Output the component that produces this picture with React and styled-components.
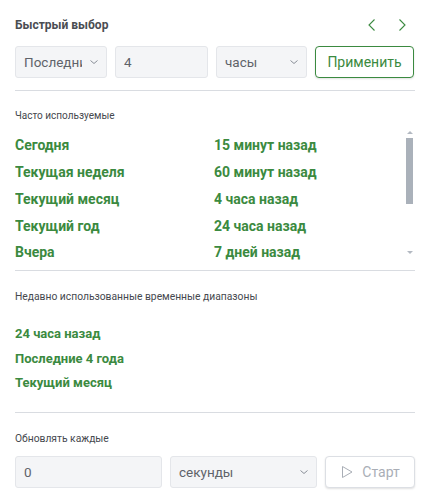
import React from "react";
import styled, { createGlobalStyle } from "styled-components";

const Global = createGlobalStyle`
  html, body { margin: 0; padding: 0; background: #fff; }
  body { font-family: Roboto, "Noto Sans", sans-serif; }
  * { box-sizing: border-box; }
`;

const Panel = styled.div`
  width: 425px;
  height: 499px;
  padding: 12px 10px 0 15px;
  display: flex;
  flex-direction: column;
  background: #fff;
`;

const Header = styled.div`
  height: 26px;
  display: flex;
  align-items: center;
  justify-content: space-between;
`;

const Title = styled.div`
  font-size: 12px;
  font-weight: 700;
  color: #4a4d52;
`;

const Arrows = styled.div`
  display: flex;
  gap: 14px;
  padding-right: 5px;
`;

const ArrowBtn = styled.button`
  border: 0;
  background: none;
  padding: 0;
  width: 16px;
  height: 16px;
  display: flex;
  align-items: center;
  justify-content: center;
  color: #3b8a40;
  cursor: pointer;
`;

const Row = styled.div`
  display: grid;
  grid-template-columns: ${(p) => p.$cols};
  gap: 8px;
  margin-top: ${(p) => p.$mt || 0}px;
  height: 32px;
`;

const Field = styled.div`
  height: 32px;
  background: #f4f5f7;
  border: 1px solid #e4e6ea;
  border-radius: 3px;
  display: flex;
  align-items: center;
  padding: 0 7px 0 8px;
  font-size: 13.5px;
  color: #5f636a;
  overflow: hidden;
`;

const FieldText = styled.span`
  flex: 1;
  white-space: nowrap;
  overflow: hidden;
  max-width: ${(p) => p.$max || "none"};
`;

const Chevron = styled.span`
  display: flex;
  color: #8a8f98;
  margin-left: auto;
  flex: none;
`;

const Button = styled.button`
  height: 32px;
  border-radius: 4px;
  border: 1px solid ${(p) => (p.$disabled ? "#dcdfe4" : "#3b8a40")};
  background: #fff;
  color: ${(p) => (p.$disabled ? "#a9aeb6" : "#3b8a40")};
  font-family: inherit;
  font-size: 14px;
  display: flex;
  align-items: center;
  justify-content: center;
  gap: 8px;
  padding: 0;
  box-shadow: 0 1px 2px rgba(0, 0, 0, 0.12);
`;

const Divider = styled.hr`
  border: 0;
  border-top: 1px solid #d9dce1;
  margin: ${(p) => p.$m};
  width: 100%;
`;

const Label = styled.div`
  font-size: ${(p) => p.$size || 11}px;
  line-height: 16px;
  color: #45484e;
  margin-top: ${(p) => p.$mt || 0}px;
`;

const ListFrame = styled.div`
  margin-top: 4px;
  height: 134px;
  display: flex;
`;

const Viewport = styled.div`
  flex: 1;
  overflow: hidden;
  padding-top: 4px;
`;

const Track = styled.div`
  width: 11px;
  display: flex;
  flex-direction: column;
  align-items: center;
  padding: 3px 0 8px;
`;

const TrackArrow = styled.div`
  width: 0;
  height: 0;
  border-left: 3px solid transparent;
  border-right: 3px solid transparent;
  ${(p) =>
    p.$down
      ? "border-top: 3px solid #b3b9c2; margin-top: auto;"
      : "border-bottom: 3px solid #b3b9c2;"}
`;

const Thumb = styled.div`
  width: 7px;
  height: 66px;
  margin-top: 4px;
  background: #aab1ba;
`;

const Grid = styled.div`
  display: grid;
  grid-template-columns: 199px 1fr;
  grid-auto-rows: 26.75px;
  align-items: center;
`;

const Link = styled.a`
  font-size: ${(p) => p.$size || 14}px;
  font-weight: 700;
  color: #3b8a40;
  text-decoration: none;
  line-height: 20px;
  white-space: nowrap;
  cursor: pointer;
`;

const RecentList = styled.div`
  margin-top: 17px;
  display: flex;
  flex-direction: column;
`;

const RecentItem = styled.div`
  height: 24.5px;
  display: flex;
  align-items: center;
`;

const ChevronDown = () => (
  <svg width="10" height="10" viewBox="0 0 10 10" fill="none">
    <path d="M1.5 3.5L5 6.5l3.5-3" stroke="currentColor" strokeWidth="1" />
  </svg>
);

const common = [
  ["Сегодня", "15 минут назад"],
  ["Текущая неделя", "60 минут назад"],
  ["Текущий месяц", "4 часа назад"],
  ["Текущий год", "24 часа назад"],
  ["Вчера", "7 дней назад"],
  ["Неделя до текущего дня", "30 дней назад"],
  ["Месяц до текущего дня", "90 дней назад"],
  ["Год до текущего дня", "1 год назад"],
];

const recent = ["24 часа назад", "Последние 4 года", "Текущий месяц"];

export default function App() {
  return (
    <>
      <Global />
      <Panel>
        <Header>
          <Title>Быстрый выбор</Title>
          <Arrows>
            <ArrowBtn aria-label="Назад">
              <svg width="12" height="14" viewBox="0 0 12 14" fill="none">
                <path d="M8.5 1.5L3 7l5.5 5.5" stroke="currentColor" strokeWidth="1.1" />
              </svg>
            </ArrowBtn>
            <ArrowBtn aria-label="Вперёд">
              <svg width="12" height="14" viewBox="0 0 12 14" fill="none">
                <path d="M3.5 1.5L9 7l-5.5 5.5" stroke="currentColor" strokeWidth="1.1" />
              </svg>
            </ArrowBtn>
          </Arrows>
        </Header>

        <Row $cols="92px 93px 91px 99px" $mt={8}>
          <Field>
            <FieldText $max="58px">Последние</FieldText>
            <Chevron><ChevronDown /></Chevron>
          </Field>
          <Field>
            <FieldText>4</FieldText>
          </Field>
          <Field>
            <FieldText>часы</FieldText>
            <Chevron><ChevronDown /></Chevron>
          </Field>
          <Button>Применить</Button>
        </Row>

        <Divider $m="12px 0 0" />

        <Label $mt={17} $size={10}>Часто используемые</Label>
        <ListFrame>
          <Viewport>
            <Grid>
              {common.map(([a, b]) => (
                <React.Fragment key={a}>
                  <Link>{a}</Link>
                  <Link>{b}</Link>
                </React.Fragment>
              ))}
            </Grid>
          </Viewport>
          <Track aria-hidden="true">
            <TrackArrow />
            <Thumb />
            <TrackArrow $down />
          </Track>
        </ListFrame>

        <Divider $m="8px 0 0" />

        <Label $mt={18} $size={10.3}>Недавно использованные временные диапазоны</Label>
        <RecentList>
          {recent.map((r) => (
            <RecentItem key={r}>
              <Link $size={13}>{r}</Link>
            </RecentItem>
          ))}
        </RecentList>

        <Divider $m="16px 0 0" />

        <Label $mt={18} $size={10.3}>Обновлять каждые</Label>
        <Row $cols="147px 147px 90px" $mt={9}>
          <Field>
            <FieldText>0</FieldText>
          </Field>
          <Field>
            <FieldText>секунды</FieldText>
            <Chevron><ChevronDown /></Chevron>
          </Field>
          <Button $disabled>
            <svg width="14" height="14" viewBox="0 0 14 14" fill="none">
              <path d="M2.5 1.5L12 7l-9.5 5.5z" stroke="currentColor" strokeWidth="1" strokeLinejoin="round" />
            </svg>
            Старт
          </Button>
        </Row>
      </Panel>
    </>
  );
}
